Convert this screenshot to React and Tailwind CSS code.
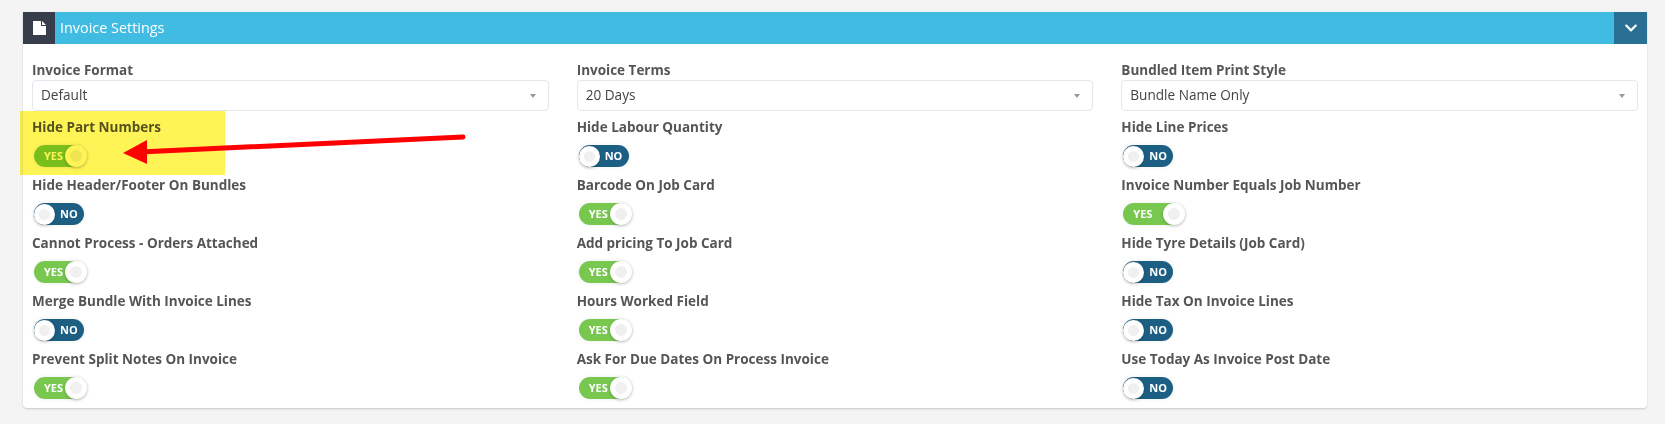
import { FaChevronDown } from 'react-icons/fa';

const fields = [
    { label: 'Hide Part Numbers', on: true },
    { label: 'Hide Labour Quantity', on: false },
    { label: 'Hide Line Prices', on: false },
    { label: 'Hide Header/Footer On Bundles', on: false },
    { label: 'Barcode On Job Card', on: true },
    { label: 'Invoice Number Equals Job Number', on: true, wide: true },
    { label: 'Cannot Process - Orders Attached', on: true },
    { label: 'Add pricing To Job Card', on: true },
    { label: 'Hide Tyre Details (Job Card)', on: false },
    { label: 'Merge Bundle With Invoice Lines', on: false },
    { label: 'Hours Worked Field', on: true },
    { label: 'Hide Tax On Invoice Lines', on: false },
    { label: 'Prevent Split Notes On Invoice', on: true },
    { label: 'Ask For Due Dates On Process Invoice', on: true },
    { label: 'Use Today As Invoice Post Date', on: false },
];

const selects = [
    { label: 'Invoice Format', value: 'Default' },
    { label: 'Invoice Terms', value: '20 Days' },
    { label: 'Bundled Item Print Style', value: 'Bundle Name Only' },
];

function Toggle({ on, wide }) {
    if (on) {
        return (
            <div className={`flex h-[22px] items-center rounded-full shadow-[0_0_4px_rgba(0,0,0,0.08)] ${wide ? 'w-[62px]' : 'w-[53px]'}`}>
                <div className="flex h-[22px] flex-1 items-center rounded-l-full bg-[#78c850] pl-[10px] text-[11px] font-bold text-white">
                    YES
                </div>
                <div className="-ml-[13px] h-[22px] w-[22px] rounded-full border-[5px] border-white bg-[#f0f0f0] shadow-[0_1px_3px_rgba(0,0,0,0.25)]" />
            </div>
        );
    }
    return (
        <div className="flex h-[22px] w-[50px] items-center rounded-full bg-[#1c5f83] shadow-[0_0_4px_rgba(0,0,0,0.08)]">
            <div className="h-[21px] w-[21px] rounded-full border-[5px] border-white bg-[#f0f0f0] shadow-[0_1px_3px_rgba(0,0,0,0.25)]" />
            <span className="ml-[5px] text-[11px] font-bold text-white">NO</span>
        </div>
    );
}

function App() {
    return (
        <div className="relative h-[424px] bg-[#f4f4f5] pt-[12px] pr-[18px] pl-[23px] font-['Open_Sans',sans-serif] text-[#555]">
            <div className="h-[396px] rounded-b-sm bg-white shadow-[0_1px_2px_rgba(0,0,0,0.18)]">
                <div className="flex h-[32px] items-center bg-[#40bbe1] text-white">
                    <div className="flex h-full w-[32px] items-center justify-center bg-[#383d4c]">
                        <svg width="13" height="14" viewBox="0 0 13 14" fill="#fff">
                            <path d="M0 0H8V5H13V14H0Z" />
                            <path d="M9 0L13 4H9Z" />
                        </svg>
                    </div>
                    <span className="ml-[5px] flex-1 text-[14.4px]">Invoice Settings</span>
                    <div className="flex h-full w-[33px] items-center justify-center bg-[#2a6f94]">
                        <FaChevronDown className="text-[14px]" />
                    </div>
                </div>

                <div className="grid grid-cols-3 gap-x-[28px] px-[9px] pt-[16px]">
                    {selects.map((s) => (
                        <div key={s.label} className="h-[57px]">
                            <div className="text-[13.5px] leading-[20px] font-bold">{s.label}</div>
                            <div className="flex h-[31px] items-center justify-between rounded-sm border border-[#e5e5ee] pr-[12px] pl-[8px] text-[13.6px] text-[#444]">
                                {s.value}
                                <span className="h-0 w-0 border-x-[3px] border-t-[4px] border-x-transparent border-t-[#999]" />
                            </div>
                        </div>
                    ))}
                    {fields.map((f) => (
                        <div key={f.label} className="h-[58px]">
                            <div className="text-[13.5px] leading-[20px] font-bold">{f.label}</div>
                            <div className="mt-[8px] ml-[2px]">
                                <Toggle on={f.on} wide={f.wide} />
                            </div>
                        </div>
                    ))}
                </div>
            </div>

            {/* screenshot annotation */}
            <div className="absolute top-[111px] left-[20px] h-[64px] w-[205px] bg-[#fff455] mix-blend-multiply" />
            <svg className="absolute top-0 left-0" width="1665" height="424">
                <line x1="463" y1="137" x2="140" y2="152" stroke="#ff0000" strokeWidth="5" strokeLinecap="round" />
                <polygon points="123,153 147,140 147,164" fill="#ff0000" />
            </svg>
        </div>
    );
}

export default App;
